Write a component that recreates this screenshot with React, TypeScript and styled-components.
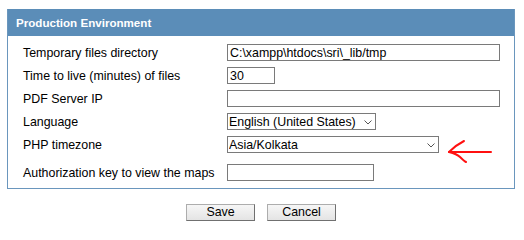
import React from 'react'
import styled, { createGlobalStyle } from 'styled-components'

const GlobalStyle = createGlobalStyle`
  html, body {
    margin: 0;
    padding: 0;
    background: #ffffff;
  }
  body {
    font-family: 'Liberation Sans', Arial, sans-serif;
    font-size: 12.4px;
    color: #000000;
  }
`

const Page = styled.div`
  padding: 9px 0 0 7px;
  width: 508px;
`

const Panel = styled.section`
  border: 1px solid #6a96bd;
  border-top: none;
`

const Header = styled.h2`
  margin: 0;
  height: 27px;
  padding: 0 8px;
  display: flex;
  align-items: center;
  background: #5b8db8;
  color: #ffffff;
  font-size: 11.6px;
  font-weight: bold;
`

const Form = styled.div`
  display: grid;
  grid-template-columns: 204px 1fr;
  row-gap: 6px;
  padding: 8px 0 7px 15px;
`

const Label = styled.label<{ $gap?: number }>`
  display: flex;
  align-items: center;
  height: 17px;
  margin-top: ${(p) => p.$gap ?? 0}px;
`

const Field = styled.div<{ $gap?: number }>`
  display: flex;
  align-items: center;
  height: 17px;
  margin-top: ${(p) => p.$gap ?? 0}px;
`

const TextInput = styled.input<{ $w: number }>`
  box-sizing: border-box;
  width: ${(p) => p.$w}px;
  height: 17px;
  margin: 0;
  padding: 0 2px;
  border: 1px solid #7a7a7a;
  border-radius: 0;
  background: #ffffff;
  font-family: 'Liberation Sans', Arial, sans-serif;
  font-size: 12.4px;
  color: #000000;
  outline: none;
`

const SelectWrap = styled.div<{ $w: number }>`
  position: relative;
  width: ${(p) => p.$w}px;
  height: 17px;
`

const Select = styled.select`
  appearance: none;
  box-sizing: border-box;
  width: 100%;
  height: 17px;
  margin: 0;
  padding: 0 12px 0 1px;
  border: 1px solid #7a7a7a;
  border-radius: 0;
  background: #ffffff;
  font-family: 'Liberation Sans', Arial, sans-serif;
  font-size: 12.4px;
  color: #000000;
  outline: none;
`

const Chevron = styled.svg`
  position: absolute;
  right: 4px;
  top: 7px;
  pointer-events: none;
`

const Annotation = styled.svg`
  margin-left: 6px;
  margin-top: 14px;
  flex: none;
`

const Actions = styled.div`
  display: flex;
  justify-content: center;
  gap: 12px;
  margin-top: 15px;
`

const Button = styled.button`
  box-sizing: border-box;
  width: 69px;
  height: 17px;
  padding: 0;
  border: 1px solid #adadad;
  border-right-color: #707070;
  border-bottom-color: #707070;
  border-radius: 0;
  background: linear-gradient(#f6f6f6, #e4e4e4);
  font-family: 'Liberation Sans', Arial, sans-serif;
  font-size: 12.4px;
  color: #000000;
  line-height: 15px;
`

const ChevronIcon = () => (
  <Chevron width="8" height="5" viewBox="0 0 8 5">
    <path d="M0.5 0.5 L4 4 L7.5 0.5" fill="none" stroke="#555" strokeWidth="1" />
  </Chevron>
)

const Dropdown = ({ w, value }: { w: number; value: string }) => (
  <SelectWrap $w={w}>
    <Select defaultValue={value}>
      <option>{value}</option>
    </Select>
    <ChevronIcon />
  </SelectWrap>
)

const RedArrow = () => (
  <Annotation width="50" height="30" viewBox="0 0 50 30">
    <g fill="none" stroke="#ff1010" strokeWidth="2" strokeLinecap="round" strokeLinejoin="round">
      <path d="M5 15 L46 15" />
      <path d="M19 4 C13 7 8 11 4 15" />
      <path d="M4 15 C8 16 12 17 15 20 C17 22 19 24 21 25" />
    </g>
  </Annotation>
)

export default function App() {
  return (
    <Page>
      <GlobalStyle />
      <Panel>
        <Header>Production Environment</Header>
        <Form>
          <Label>Temporary files directory</Label>
          <Field>
            <TextInput $w={273} defaultValue="C:\xampp\htdocs\sri\_lib/tmp" />
          </Field>

          <Label>Time to live (minutes) of files</Label>
          <Field>
            <TextInput $w={48} defaultValue="30" />
          </Field>

          <Label>PDF Server IP</Label>
          <Field>
            <TextInput $w={273} defaultValue="" />
          </Field>

          <Label>Language</Label>
          <Field>
            <Dropdown w={149} value="English (United States)" />
          </Field>

          <Label>PHP timezone</Label>
          <Field>
            <Dropdown w={212} value="Asia/Kolkata" />
            <RedArrow />
          </Field>

          <Label $gap={5}>Authorization key to view the maps</Label>
          <Field $gap={5}>
            <TextInput $w={147} defaultValue="" />
          </Field>
        </Form>
      </Panel>
      <Actions>
        <Button type="button">Save</Button>
        <Button type="button">Cancel</Button>
      </Actions>
    </Page>
  )
}
